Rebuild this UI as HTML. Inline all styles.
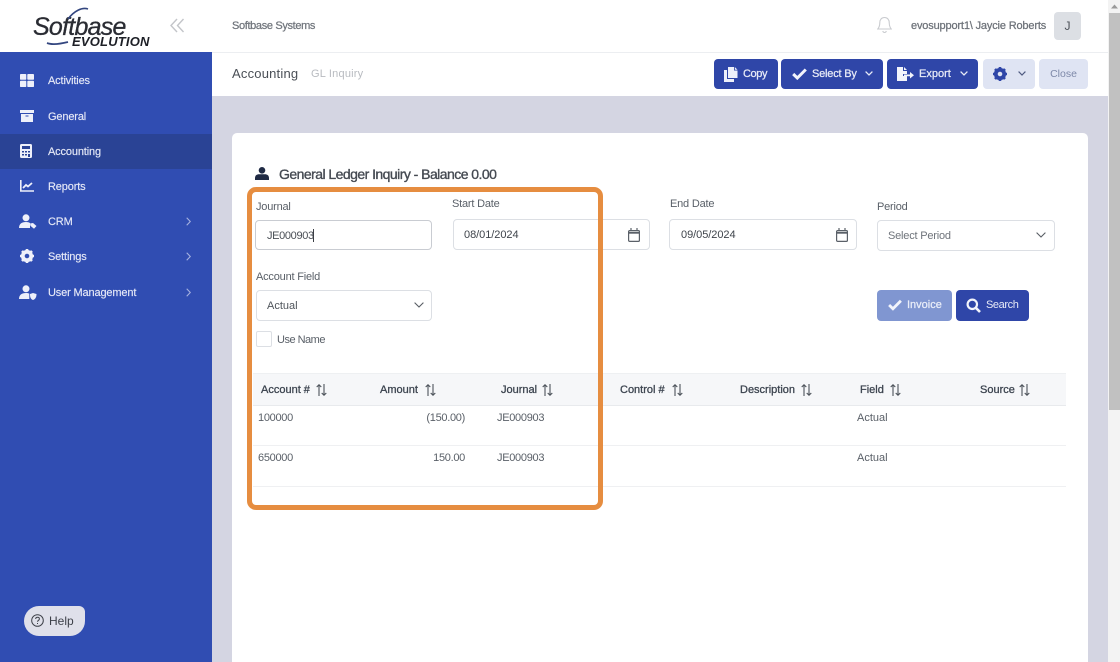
<!DOCTYPE html>
<html><head><meta charset="utf-8">
<style>
html,body{margin:0;padding:0;width:1120px;height:662px;overflow:hidden;background:#fff}
body{position:relative;font-family:"Liberation Sans",sans-serif;font-size:11px;color:#495057}
.a,.t,svg{position:absolute}
.t{white-space:nowrap;line-height:14px}
.m{-webkit-text-stroke:.25px currentColor}
.side{color:#e6e9f7;font-size:11px;left:48px;letter-spacing:-.15px;-webkit-text-stroke:.15px currentColor}
.lbl{color:#5a6068;font-size:11px;letter-spacing:-.2px}
.box{position:absolute;background:#fff;border:1px solid #dcdfe4;border-radius:4px;box-sizing:border-box}
.btn{position:absolute;background:#2f46a8;border-radius:4px;color:#e8ebf7;box-sizing:border-box}
.th{color:#3d4550;font-size:11px;-webkit-text-stroke:.3px currentColor}
.td{color:#5a6068;font-size:11px;letter-spacing:-.3px}
</style></head><body>

<!-- page background -->
<div class="a" style="left:212px;top:96px;width:896px;height:566px;background:#d4d5e2"></div>
<div class="a" style="left:232px;top:133px;width:856px;height:529px;background:#fff;border-radius:5px 5px 0 0"></div>

<!-- sidebar -->
<div class="a" style="left:0;top:52px;width:212px;height:610px;background:#304db2"></div>
<div class="a" style="left:0;top:134px;width:212px;height:35px;background:#2a4395"></div>

<!-- logo -->
<div class="t" style="left:33px;top:12px;font-size:25px;line-height:30px;font-style:italic;color:#2a2c33;letter-spacing:-.75px;-webkit-text-stroke:.3px currentColor">Softbase</div>
<div class="t" style="left:72px;top:35px;font-size:13px;line-height:14px;font-style:italic;font-weight:bold;color:#1d1f26;letter-spacing:.2px">EVOLUTION</div>
<svg style="left:44px;top:6px" width="50" height="42" viewBox="0 0 50 42" fill="none"><path d="M24 13C30 5 38 1 44 3" stroke="#33467f" stroke-width="1.6"/><path d="M3 37C8 39 16 38 24 36" stroke="#33467f" stroke-width="1.8"/></svg>
<svg style="left:169px;top:18px" width="16" height="15" viewBox="0 0 16 15" fill="none" stroke="#c3c5c9" stroke-width="1.4"><path d="M8 1 2 7.5 8 14"/><path d="M14.500 1 8.500 7.500 14.500 14"/></svg>

<!-- sidebar icons -->
<svg style="left:20px;top:74px" width="14" height="13" viewBox="0 0 14 13" fill="#eef0fa"><rect width="6.300" height="5.800" rx=".8"/><rect x="7.300" width="6.700" height="5.800" rx=".8"/><rect y="6.800" width="6.300" height="6.200" rx=".8"/><rect x="7.300" y="6.800" width="6.700" height="6.200" rx=".8"/></svg>
<svg style="left:20px;top:110px" width="14" height="12" viewBox="0 0 14 12" fill="#eef0fa"><rect width="14" height="3"/><path d="M1 4h12v8H1z"/><rect x="5.500" y="5.500" width="3" height="1" fill="#304db2"/></svg>
<svg style="left:20px;top:144px" width="12" height="14" viewBox="0 0 12 14" fill="#eef0fa"><rect width="12" height="14" rx="1.500"/><rect x="2" y="2" width="8" height="3" fill="#2a4395"/><g fill="#2a4395"><rect x="2" y="7" width="2" height="1.500"/><rect x="5" y="7" width="2" height="1.500"/><rect x="8" y="7" width="2" height="1.500"/><rect x="2" y="10" width="2" height="1.500"/><rect x="5" y="10" width="2" height="1.500"/><rect x="8" y="10" width="2" height="3"/></g></svg>
<svg style="left:20px;top:180px" width="14" height="12" viewBox="0 0 14 12" fill="none" stroke="#eef0fa"><path d="M.8 0v11h13.200" stroke-width="1.600"/><path d="M3 8l3-3 2 1.500L12 3" stroke-width="1.800"/></svg>
<svg style="left:19px;top:214px" width="18" height="15" viewBox="0 0 18 15" fill="#eef0fa"><circle cx="7" cy="3.800" r="3.500"/><path d="M0 14c0-4 2.500-6 7-6 2 0 3 .4 4 1v5z"/><path d="M11 9.500l3-.5 3.500 3-2.500 2.700-3.500-2.800z"/></svg>
<svg style="left:20px;top:249px" width="14" height="14" viewBox="0 0 14 14"><circle cx="7" cy="7" r="4.200" fill="none" stroke="#eef0fa" stroke-width="3.800"/><g stroke="#eef0fa" stroke-width="2.600"><path d="M7 0v3M7 11v3M0 7h3M11 7h3M2 2l2 2M10 10l2 2M12 2l-2 2M4 10l-2 2"/></g></svg>
<svg style="left:19px;top:285px" width="18" height="15" viewBox="0 0 18 15" fill="#eef0fa"><circle cx="7" cy="3.800" r="3.500"/><path d="M0 14c0-4 2.500-6 7-6 1.500 0 2.500.2 3.300.6V14z"/><path d="M11 9l3-1 3.500 1c0 3-1 5-3.500 6-2.500-1-3-3-3-6z"/></svg>

<div class="t side" style="top:74px">Activities</div>
<div class="t side" style="top:110px">General</div>
<div class="t side" style="top:145px">Accounting</div>
<div class="t side" style="top:180px">Reports</div>
<div class="t side" style="top:215px">CRM</div>
<div class="t side" style="top:250px">Settings</div>
<div class="t side" style="top:286px">User Management</div>
<svg style="left:186px;top:217px" width="5" height="9" viewBox="0 0 5 9" fill="none" stroke="#a6b2e0" stroke-width="1.100"><path d="M.7.700 4.300 4.500.7 8.300"/></svg>
<svg style="left:186px;top:252px" width="5" height="9" viewBox="0 0 5 9" fill="none" stroke="#a6b2e0" stroke-width="1.100"><path d="M.7.700 4.300 4.500.7 8.300"/></svg>
<svg style="left:186px;top:288px" width="5" height="9" viewBox="0 0 5 9" fill="none" stroke="#a6b2e0" stroke-width="1.100"><path d="M.7.700 4.300 4.500.7 8.300"/></svg>

<!-- help -->
<div class="a" style="left:24px;top:606px;width:61px;height:30px;background:#dfe0ea;border-radius:15px 6px 15px 15px"></div>
<svg style="left:31px;top:614px" width="13" height="13" viewBox="0 0 13 13" fill="none" stroke="#3d4048"><circle cx="6.500" cy="6.500" r="5.800"/><path d="M4.700 5c0-2.300 3.700-2.300 3.700 0 0 1.300-1.900 1.300-1.900 2.800"/><path d="M6.500 9v1"/></svg>
<div class="t" style="left:49px;top:614px;font-size:12px;color:#3d4048">Help</div>

<!-- top bar -->
<div class="a" style="left:212px;top:52px;width:896px;height:1px;background:#eceef1"></div>
<div class="t m" style="left:232px;top:19px;font-size:11px;color:#70757c;letter-spacing:-.35px">Softbase Systems</div>
<svg style="left:877px;top:16px" width="15" height="18" viewBox="0 0 15 18" fill="none" stroke="#c9cbcf" stroke-width="1.100"><path d="M7.500 1.500c-3 0-4.700 2.200-4.700 5 0 3.500-.8 5-2 6.500h13.400c-1.200-1.500-2-3-2-6.500 0-2.800-1.700-5-4.700-5z"/><path d="M5.800 15c.5 2 3 2 3.500 0"/></svg>
<div class="t m" style="left:911px;top:19px;font-size:11px;color:#6d7279;letter-spacing:-.16px">evosupport1\ Jaycie Roberts</div>
<div class="a" style="left:1054px;top:12px;width:27px;height:28px;background:#dcdfe4;border-radius:4px;text-align:center;line-height:28px;font-size:12px;color:#4c5158">J</div>

<!-- subheader -->
<div class="t" style="left:232px;top:67px;font-size:13px;color:#4a4f56;letter-spacing:.2px">Accounting</div>
<div class="t" style="left:311px;top:67px;font-size:11px;color:#b8bbc0;letter-spacing:.2px">GL Inquiry</div>

<div class="btn" style="left:714px;top:59px;width:64px;height:30px"></div>
<svg style="left:724px;top:67px" width="14" height="15" viewBox="0 0 14 15" fill="#eef0fa"><path d="M4 0h6v3.500h3.500V11H4z" /><path d="M10.800 0 13.500 2.700h-2.700z"/><path d="M0 3h3v9h7v3H0z"/></svg>
<div class="t m" style="left:743px;top:67px;font-size:11px;color:#e8ebf7;letter-spacing:-.4px">Copy</div>

<div class="btn" style="left:781px;top:59px;width:102px;height:30px"></div>
<svg style="left:792px;top:68px" width="15" height="12" viewBox="0 0 15 12" fill="none" stroke="#f2f4fb" stroke-width="3"><path d="M1.200 6 5.300 10 13.800 1.500"/></svg>
<div class="t m" style="left:812px;top:67px;font-size:11px;color:#e8ebf7;letter-spacing:-.2px">Select By</div>
<svg style="left:865px;top:71px" width="8" height="5" viewBox="0 0 8 5" fill="none" stroke="#e8ebf7" stroke-width="1.300"><path d="M.6.600 4 4 7.400.600"/></svg>

<div class="btn" style="left:887px;top:59px;width:91px;height:30px"></div>
<svg style="left:897px;top:67px" width="17" height="14" viewBox="0 0 17 14" fill="#f2f4fb"><path d="M0 0h6v4h4v3H6v2h4v5H0z"/><path d="M7 0l3 3H7z"/><path d="M7 7.500h6V5l4 3.300-4 3.200V9.200H7z"/></svg>
<div class="t m" style="left:919px;top:67px;font-size:11px;color:#e8ebf7">Export</div>
<svg style="left:960px;top:71px" width="8" height="5" viewBox="0 0 8 5" fill="none" stroke="#e8ebf7" stroke-width="1.300"><path d="M.6.600 4 4 7.400.600"/></svg>

<div class="a" style="left:983px;top:59px;width:52px;height:30px;background:#dfe4f3;border-radius:4px"></div>
<svg style="left:993px;top:67px" width="14" height="14" viewBox="0 0 14 14"><circle cx="7" cy="7" r="4.200" fill="none" stroke="#2f46a8" stroke-width="3.800"/><g stroke="#2f46a8" stroke-width="2.600"><path d="M7 0v3M7 11v3M0 7h3M11 7h3M2 2l2 2M10 10l2 2M12 2l-2 2M4 10l-2 2"/></g></svg>
<svg style="left:1018px;top:71px" width="8" height="5" viewBox="0 0 8 5" fill="none" stroke="#4e5a80" stroke-width="1.200"><path d="M.6.600 4 4 7.400.600"/></svg>
<div class="a" style="left:1039px;top:59px;width:49px;height:30px;background:#dfe4f3;border-radius:4px;text-align:center;line-height:30px;font-size:10.500px;color:#7d88a8">Close</div>

<!-- card title -->
<svg style="left:255px;top:167px" width="14" height="13" viewBox="0 0 14 13" fill="#1f2a44"><circle cx="7" cy="3.300" r="3.300"/><path d="M0 13v-2c0-2.500 2-3.700 4-3.700h6c2 0 4 1.200 4 3.700v2z"/></svg>
<div class="t" style="left:279px;top:166px;font-size:14px;line-height:16px;color:#454a52;letter-spacing:-.54px;-webkit-text-stroke:.35px currentColor">General Ledger Inquiry - Balance 0.00</div>

<!-- form -->
<div class="t lbl" style="left:256px;top:200px">Journal</div>
<div class="t lbl" style="left:452px;top:197px">Start Date</div>
<div class="t lbl" style="left:670px;top:197px">End Date</div>
<div class="t lbl" style="left:877px;top:200px">Period</div>

<div class="box" style="left:255px;top:220px;width:177px;height:30px;border:1.500px solid #c9ccd2"></div>
<div class="t" style="left:267px;top:229px;font-size:11px;color:#4a4f56;letter-spacing:-.35px">JE000903</div>
<div class="a" style="left:313px;top:229px;width:1px;height:13px;background:#3a3d44"></div>

<div class="box" style="left:453px;top:219px;width:197px;height:31px"></div>
<div class="t" style="left:464px;top:228px;font-size:11px;color:#3f444b;letter-spacing:-.05px">08/01/2024</div>
<svg style="left:628px;top:228px" width="12" height="14" viewBox="0 0 12 14" fill="none" stroke="#5a6068" stroke-width="1.200"><rect x=".6" y="2.600" width="10.800" height="10.800" rx="1"/><path d="M.6 4.800h10.800" stroke-width="1.800"/><path d="M3 0v3M9 0v3"/></svg>

<div class="box" style="left:669px;top:219px;width:188px;height:31px"></div>
<div class="t" style="left:681px;top:228px;font-size:11px;color:#3f444b;letter-spacing:-.05px">09/05/2024</div>
<svg style="left:836px;top:228px" width="12" height="14" viewBox="0 0 12 14" fill="none" stroke="#5a6068" stroke-width="1.200"><rect x=".6" y="2.600" width="10.800" height="10.800" rx="1"/><path d="M.6 4.800h10.800" stroke-width="1.800"/><path d="M3 0v3M9 0v3"/></svg>

<div class="box" style="left:877px;top:220px;width:178px;height:31px"></div>
<div class="t" style="left:888px;top:229px;font-size:11px;color:#6f747b;letter-spacing:-.2px">Select Period</div>
<svg style="left:1036px;top:232px" width="10" height="6" viewBox="0 0 10 6" fill="none" stroke="#585d64" stroke-width="1.100"><path d="M.6.600 5 5 9.400.600"/></svg>

<div class="t lbl" style="left:256px;top:270px">Account Field</div>
<div class="box" style="left:256px;top:290px;width:176px;height:31px"></div>
<div class="t" style="left:267px;top:299px;font-size:11px;color:#4f545b">Actual</div>
<svg style="left:414px;top:302px" width="10" height="6" viewBox="0 0 10 6" fill="none" stroke="#585d64" stroke-width="1.100"><path d="M.6.600 5 5 9.400.600"/></svg>

<div class="box" style="left:256px;top:331px;width:16px;height:16px;border-radius:2px"></div>
<div class="t lbl" style="left:277px;top:333px;letter-spacing:-.5px">Use Name</div>

<!-- buttons -->
<div class="a" style="left:877px;top:290px;width:75px;height:31px;background:#8096d1;border-radius:4px"></div>
<svg style="left:888px;top:299px" width="14" height="12" viewBox="0 0 15 12" fill="none" stroke="#f2f4fb" stroke-width="3"><path d="M1.200 6 5.300 10 13.800 1.500"/></svg>
<div class="t m" style="left:907px;top:298px;font-size:11px;color:#e9edf8">Invoice</div>
<div class="btn" style="left:956px;top:290px;width:73px;height:31px"></div>
<svg style="left:966px;top:298px" width="15" height="15" viewBox="0 0 15 15" fill="none" stroke="#f2f4fb"><circle cx="6.300" cy="6.300" r="4.700" stroke-width="2.200"/><path d="M9.800 9.800 14 14" stroke-width="2.600"/></svg>
<div class="t" style="left:986px;top:298px;font-size:11px;color:#e8ebf7;letter-spacing:-.4px">Search</div>

<!-- table -->
<div class="a" style="left:253px;top:373px;width:813px;height:33px;background:#f6f7f9;border-top:1px solid #eef0f2;border-bottom:1px solid #e8eaed;box-sizing:border-box"></div>
<div class="a" style="left:253px;top:445px;width:813px;height:1px;background:#eff0f2"></div>
<div class="a" style="left:253px;top:486px;width:813px;height:1px;background:#eff0f2"></div>

<div class="t th" style="left:261px;top:383px">Account #</div>
<div class="t th" style="left:380px;top:383px">Amount</div>
<div class="t th" style="left:501px;top:383px">Journal</div>
<div class="t th" style="left:620px;top:383px">Control #</div>
<div class="t th" style="left:740px;top:383px">Description</div>
<div class="t th" style="left:860px;top:383px">Field</div>
<div class="t th" style="left:980px;top:383px">Source</div>

<svg style="left:316px;top:384px" width="11" height="12" viewBox="0 0 11 12" fill="none" stroke="#4d535b" stroke-width="1.100"><path d="M3 12V1M.7 3 3 .8 5.300 3M8 0v11M5.700 9 8 11.200 10.300 9"/></svg>
<svg style="left:425px;top:384px" width="11" height="12" viewBox="0 0 11 12" fill="none" stroke="#4d535b" stroke-width="1.100"><path d="M3 12V1M.7 3 3 .8 5.300 3M8 0v11M5.700 9 8 11.200 10.300 9"/></svg>
<svg style="left:542px;top:384px" width="11" height="12" viewBox="0 0 11 12" fill="none" stroke="#4d535b" stroke-width="1.100"><path d="M3 12V1M.7 3 3 .8 5.300 3M8 0v11M5.700 9 8 11.200 10.300 9"/></svg>
<svg style="left:672px;top:384px" width="11" height="12" viewBox="0 0 11 12" fill="none" stroke="#4d535b" stroke-width="1.100"><path d="M3 12V1M.7 3 3 .8 5.300 3M8 0v11M5.700 9 8 11.200 10.300 9"/></svg>
<svg style="left:801px;top:384px" width="11" height="12" viewBox="0 0 11 12" fill="none" stroke="#4d535b" stroke-width="1.100"><path d="M3 12V1M.7 3 3 .8 5.300 3M8 0v11M5.700 9 8 11.200 10.300 9"/></svg>
<svg style="left:890px;top:384px" width="11" height="12" viewBox="0 0 11 12" fill="none" stroke="#4d535b" stroke-width="1.100"><path d="M3 12V1M.7 3 3 .8 5.300 3M8 0v11M5.700 9 8 11.200 10.300 9"/></svg>
<svg style="left:1019px;top:384px" width="11" height="12" viewBox="0 0 11 12" fill="none" stroke="#4d535b" stroke-width="1.100"><path d="M3 12V1M.7 3 3 .8 5.300 3M8 0v11M5.700 9 8 11.200 10.300 9"/></svg>

<div class="t td" style="left:258px;top:411px">100000</div>
<div class="t td" style="right:655px;top:411px">(150.00)</div>
<div class="t td" style="left:497px;top:411px">JE000903</div>
<div class="t td" style="left:857px;top:411px;letter-spacing:0">Actual</div>
<div class="t td" style="left:258px;top:451px">650000</div>
<div class="t td" style="right:655px;top:451px">150.00</div>
<div class="t td" style="left:497px;top:451px">JE000903</div>
<div class="t td" style="left:857px;top:451px;letter-spacing:0">Actual</div>

<!-- orange highlight -->
<div class="a" style="left:247px;top:187px;width:356px;height:323px;box-sizing:border-box;border:5px solid #e68d40;border-radius:9px"></div>

<!-- scrollbar -->
<div class="a" style="left:1108px;top:0;width:12px;height:662px;background:#f3f3f3"></div>
<div class="a" style="left:1109px;top:13px;width:11px;height:397px;background:#c1c1c1"></div>
<svg style="left:1111px;top:4px" width="7" height="5" viewBox="0 0 7 5" fill="#9a9a9a"><path d="M3.500.5 7 4.500H0z"/></svg>
</body></html>
